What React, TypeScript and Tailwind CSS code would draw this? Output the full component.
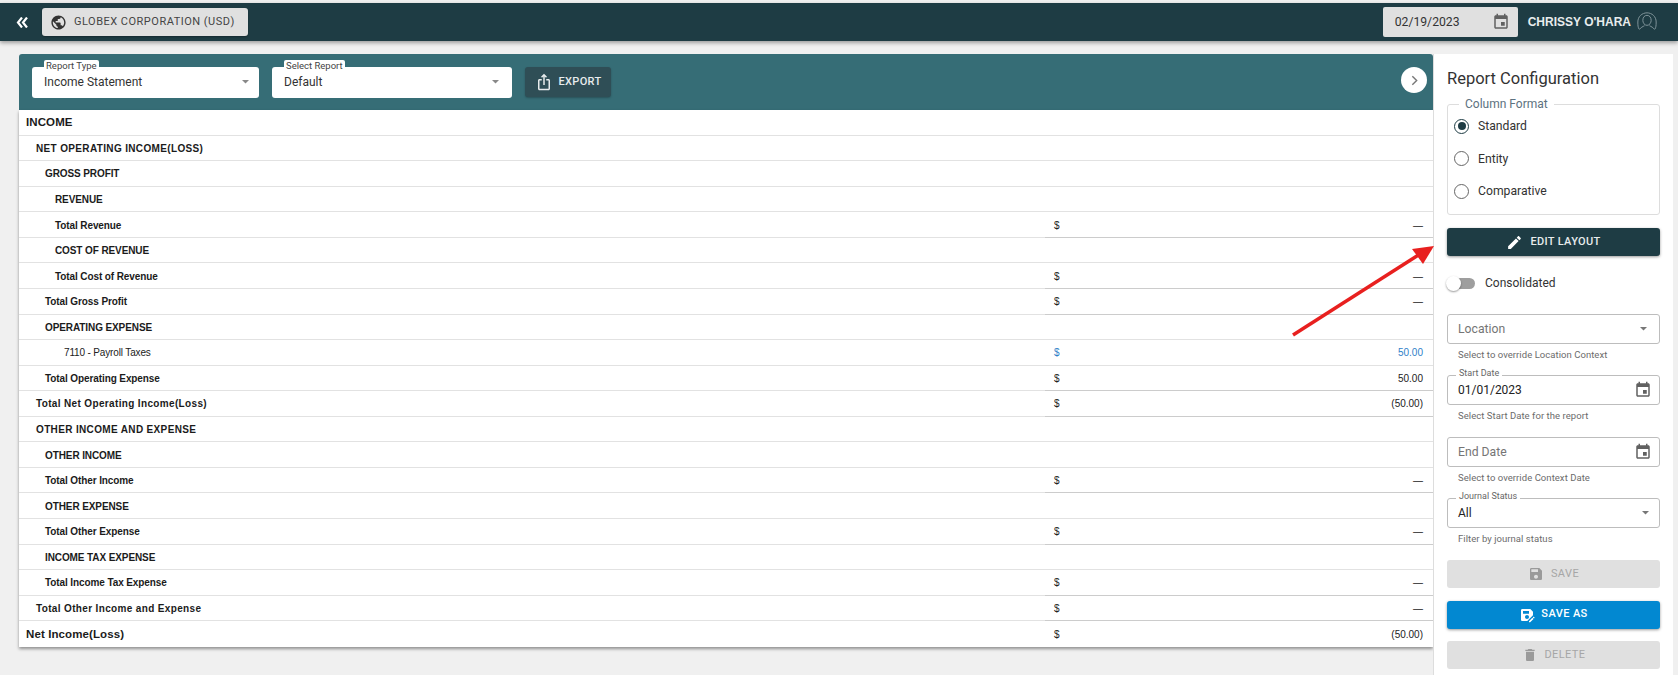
import React from "react";

const P = {
  event: "M17 12h-5v5h5v-5zM16 1v2H8V1H6v2H5c-1.11 0-1.99.9-1.99 2L3 19c0 1.1.89 2 2 2h14c1.1 0 2-.9 2-2V5c0-1.1-.9-2-2-2h-1V1h-2zm3 18H5V8h14v11z",
  globe: "M12 2C6.48 2 2 6.48 2 12s4.48 10 10 10 10-4.48 10-10S17.52 2 12 2zm-1 17.93c-3.95-.49-7-3.85-7-7.93 0-.62.08-1.21.21-1.79L9 15v1c0 1.1.9 2 2 2v1.93zm6.9-2.54c-.26-.81-1-1.39-1.9-1.39h-1v-3c0-.55-.45-1-1-1H8v-2h2c.55 0 1-.45 1-1V7h2c1.1 0 2-.9 2-2v-.41c2.93 1.19 5 4.06 5 7.41 0 2.08-.8 3.97-2.1 5.39z",
  edit: "M3 17.25V21h3.75L17.81 9.94l-3.75-3.75L3 17.25zM20.71 7.04c.39-.39.39-1.02 0-1.41l-2.34-2.34c-.39-.39-1.02-.39-1.41 0l-1.83 1.83 3.75 3.75 1.83-1.83z",
  save: "M17 3H5c-1.11 0-2 .9-2 2v14c0 1.1.89 2 2 2h14c1.1 0 2-.9 2-2V7l-4-4zm-5 16c-1.66 0-3-1.34-3-3s1.34-3 3-3 3 1.34 3 3-1.34 3-3 3zm3-10H5V5h10v4z",
  del: "M6 19c0 1.1.9 2 2 2h8c1.1 0 2-.9 2-2V7H6v12zM19 4h-3.5l-1-1h-5l-1 1H5v2h14V4z",
  share: "M16 5l-1.42 1.42-1.59-1.59V16h-1.98V4.83L9.42 6.42 8 5l4-4 4 4zm4 5v11c0 1.1-.9 2-2 2H6c-1.11 0-2-.9-2-2V10c0-1.11.89-2 2-2h3v2H6v11h12V10h-3V8h3c1.1 0 2 .89 2 2z",
  saveAs: "M21 12.4V7l-4-4H5c-1.11 0-2 .9-2 2v14c0 1.1.89 2 2 2h7.4l8.6-8.6zM15 15c0 1.66-1.34 3-3 3s-3-1.34-3-3 1.34-3 3-3 3 1.34 3 3zM6 6h9v4H6V6zm13.99 10.25 1.77 1.77L16.77 23H15v-1.77l4.99-4.98zm3.26.26-.85.85-1.77-1.77.85-.85c.2-.2.51-.2.71 0l1.06 1.06c.2.2.2.52 0 .71z",
};

function Icon({ d, className }: { d: string; className: string }) {
  return (
    <svg viewBox="0 0 24 24" fill="currentColor" className={className}>
      <path d={d} />
    </svg>
  );
}

function Caret({ className }: { className: string }) {
  return (
    <svg viewBox="0 0 10 5" fill="currentColor" className={className}>
      <path d="M0 0h10L5 5z" />
    </svg>
  );
}

type Row = { label: string; level: 0 | 1 | 2 | 3 | 4; amount?: string };
const rows: Row[] = [
  { label: "INCOME", level: 0 },
  { label: "NET OPERATING INCOME(LOSS)", level: 1 },
  { label: "GROSS PROFIT", level: 2 },
  { label: "REVENUE", level: 3 },
  { label: "Total Revenue", level: 3, amount: "—" },
  { label: "COST OF REVENUE", level: 3 },
  { label: "Total Cost of Revenue", level: 3, amount: "—" },
  { label: "Total Gross Profit", level: 2, amount: "—" },
  { label: "OPERATING EXPENSE", level: 2 },
  { label: "7110 - Payroll Taxes", level: 4, amount: "50.00" },
  { label: "Total Operating Expense", level: 2, amount: "50.00" },
  { label: "Total Net Operating Income(Loss)", level: 1, amount: "(50.00)" },
  { label: "OTHER INCOME AND EXPENSE", level: 1 },
  { label: "OTHER INCOME", level: 2 },
  { label: "Total Other Income", level: 2, amount: "—" },
  { label: "OTHER EXPENSE", level: 2 },
  { label: "Total Other Expense", level: 2, amount: "—" },
  { label: "INCOME TAX EXPENSE", level: 2 },
  { label: "Total Income Tax Expense", level: 2, amount: "—" },
  { label: "Total Other Income and Expense", level: 1, amount: "—" },
  { label: "Net Income(Loss)", level: 0, amount: "(50.00)" },
];

const levelClass: Record<number, string> = {
  0: "pl-[7px] text-[11.5px] font-bold text-[#1b1b1b] tracking-[0.1px]",
  1: "pl-[17px] text-[10px] font-bold text-[#1b1b1b] tracking-[0.35px]",
  2: "pl-[26px] text-[10px] font-bold text-[#1b1b1b] tracking-[-0.1px]",
  3: "pl-[36px] text-[10px] font-bold text-[#1b1b1b] tracking-[-0.1px]",
  4: "pl-[45px] text-[10px] text-[#222222] tracking-[-0.15px]",
};

function TableRow({ r, last }: { r: Row; last: boolean }) {
  const acct = r.level === 4;
  const hasAmount = r.amount !== undefined;
  const amountBorder = last
    ? ""
    : hasAmount && !acct
      ? "border-b border-[#cccccc]"
      : "border-b border-[#e2e2e2]";
  return (
    <div className="flex h-[25.57px] items-stretch">
      <div className={`flex w-[1026px] items-center pt-[1px] ${levelClass[r.level]} ${last ? "" : "border-b border-[#e2e2e2]"}`}>
        <span className="whitespace-nowrap">{r.label}</span>
      </div>
      <div
        className={`flex flex-1 items-center justify-between pl-[9px] pr-[10px] pt-[1px] text-[10px] ${amountBorder} ${acct ? "text-[#2f7fc8]" : "text-[#222222]"}`}
      >
        {hasAmount && <span>$</span>}
        {hasAmount && <span>{r.amount}</span>}
      </div>
    </div>
  );
}

function HelperText({ children }: { children: React.ReactNode }) {
  return <div className="mt-[4px] pl-[11px] text-[9.5px] leading-[14px] tracking-[0.05px] text-[#6b6b6b]">{children}</div>;
}

function Radio({ label, checked }: { label: string; checked?: boolean }) {
  return (
    <div className="flex h-[32.5px] items-center gap-[9px] pl-[1px]">
      <span className={`flex h-[15px] w-[15px] items-center justify-center rounded-full border-[1.5px] ${checked ? "border-[#1e3c44]" : "border-[#666666]"}`}>
        {checked && <span className="h-[8px] w-[8px] rounded-full bg-[#1e3c44]" />}
      </span>
      <span className="text-[12.2px] text-[#333333]">{label}</span>
    </div>
  );
}

function Field({
  label,
  value,
  placeholder,
  trailing,
}: {
  label?: string;
  value?: string;
  placeholder?: string;
  trailing: React.ReactNode;
}) {
  return (
    <div className="relative flex h-[30px] items-center justify-between rounded-[3px] border border-[#bdbdbd] pl-[10px] pr-[7px]">
      {label && (
        <span className="absolute -top-[8px] left-[8px] bg-white px-[3px] text-[9px] leading-[11px] text-[#666666]">
          {label}
        </span>
      )}
      {value && <span className="text-[12px] text-[#222222]">{value}</span>}
      {placeholder && <span className="text-[12.2px] text-[#757575]">{placeholder}</span>}
      {trailing}
    </div>
  );
}

function ActionButton({ icon, label, active, gap }: { icon: string; label: string; active?: boolean; gap: string }) {
  return (
    <div
      className={`flex h-[28px] items-center justify-center ${gap} rounded-[3px] text-[11px] tracking-[0.4px] ${active ? "bg-[#0288d1] font-medium text-white shadow-[0_1px_3px_rgba(0,0,0,0.4)]" : "bg-[#e0e0e0] text-[#a6a6a6]"}`}
    >
      <Icon d={icon} className={`h-[16px] w-[16px] ${active ? "text-white" : "text-[#9a9a9a]"}`} />
      {label}
    </div>
  );
}

function ReportSelect({ label, value, width, caretPad }: { label: string; value: string; width: string; caretPad: string }) {
  return (
    <div className={`relative flex h-[31px] ${width} items-center justify-between rounded-[3px] bg-white pl-[12px] ${caretPad}`}>
      <span className="absolute -top-[7px] left-[12px] rounded-t-[2px] bg-white px-[2px] text-[9.5px] leading-[11px] text-[#444444]">
        {label}
      </span>
      <span className="text-[12px] text-[#333333]">{value}</span>
      <Caret className="h-[3.5px] w-[7px] text-[#888888]" />
    </div>
  );
}

export default function App() {
  return (
    <div className="relative flex h-[675px] w-full flex-col overflow-hidden bg-[#f0f0f0] font-['Roboto',sans-serif]">
      <div className="h-[3px] bg-[#f0f0f0]" />
      <header className="z-10 flex h-[38px] items-center justify-between bg-[#1e3c44] shadow-[0_2px_4px_rgba(0,0,0,0.35)]">
        <div className="flex items-center">
          <svg viewBox="0 0 12 11" fill="none" stroke="white" strokeWidth="2.2" className="ml-[16px] h-[11px] w-[12px]">
            <path d="M6 .5L2 5.5 6 10.5M11 .5L7 5.5 11 10.5" />
          </svg>
          <div className="ml-[14px] flex h-[28px] w-[206px] items-center gap-[7px] rounded-[3px] bg-[#e0e0e0] pl-[8px] text-[11px] tracking-[0.5px] whitespace-nowrap text-[#444444] shadow-[0_1px_2px_rgba(0,0,0,0.3)]">
            <Icon d={P.globe} className="h-[17px] w-[17px] text-[#333333]" />
            GLOBEX CORPORATION (USD)
          </div>
        </div>
        <div className="flex items-center">
          <div className="flex h-[30px] w-[135px] items-center justify-between rounded-[2px] bg-[#e0e0e0] pl-[12px] pr-[8px] text-[12.2px] text-[#333333]">
            02/19/2023
            <Icon d={P.event} className="h-[18px] w-[18px] text-[#616161]" />
          </div>
          <span className="ml-[10px] font-['Liberation_Sans',sans-serif] text-[12px] font-bold text-[#e8eced]">CHRISSY O'HARA</span>
          <svg viewBox="0 0 24 24" fill="none" stroke="#7f9399" strokeWidth="1.2" className="ml-[6px] mr-[21px] h-[20px] w-[20px]">
            <path d="M2.5 20.5C1.2 18.5 1 16 1 12 1 5.5 6 1 12 1s11 4.500 11 11c0 4-.2 6.500-1.500 8.500" />
            <path d="M7 10c0-3.500 2-6 5-6s5 2.500 5 6c0 3-2 6-5 6s-5-3-5-6z" />
            <path d="M3 21c1.500-2.500 4-3.500 6-4.500M21 21c-1.500-2.500-4-3.500-6-4.500" />
          </svg>
        </div>
      </header>

      <div className="flex flex-1 pl-[19px] pt-[13px]">
        <main className="w-[1414px]">
          <div className="flex h-[56px] items-center rounded-t-[3px] bg-[#366d76] pl-[13px] pr-[6px]">
            <ReportSelect label="Report Type" value="Income Statement" width="w-[227px]" caretPad="pr-[10px]" />
            <div className="w-[13px]" />
            <ReportSelect label="Select Report" value="Default" width="w-[240px]" caretPad="pr-[13px]" />
            <div className="ml-[13px] flex h-[30px] w-[86px] items-center justify-center gap-[6px] rounded-[3px] bg-[#2f4e56] text-[11px] font-medium tracking-[0.3px] text-[#e8eced] shadow-[0_1px_2px_rgba(0,0,0,0.25)]">
              <Icon d={P.share} className="h-[18px] w-[18px]" />
              EXPORT
            </div>
            <div className="ml-auto flex h-[26px] w-[26px] -translate-y-[2px] items-center justify-center rounded-full bg-white text-[#777777]">
              <svg viewBox="0 0 24 24" fill="none" stroke="currentColor" strokeWidth="2.6" className="h-[13px] w-[13px]">
                <path d="M8 4l8 8-8 8" />
              </svg>
            </div>
          </div>
          <div className="bg-white font-['Liberation_Sans',sans-serif] shadow-[0_2px_3px_rgba(0,0,0,0.4)]">
            {rows.map((r, i) => (
              <TableRow key={r.label} r={r} last={i === rows.length - 1} />
            ))}
          </div>
        </main>

        <aside className="w-[240px] border-l border-[#dddddd] bg-white pl-[13px] pr-[13px] pt-[16px]">
          <h2 className="text-[16.5px] leading-[18px] font-normal text-[#333333]">Report Configuration</h2>
          <fieldset className="mt-[10px] h-[117px] rounded-[3px] border border-[#dddddd] px-[5px]">
            <legend className="ml-[6px] px-[6px] text-[12px] leading-[12px] text-[#5d7280]">Column Format</legend>
            <Radio label="Standard" checked />
            <Radio label="Entity" />
            <Radio label="Comparative" />
          </fieldset>

          <div className="mt-[13px] flex h-[28px] items-center justify-center gap-[7px] rounded-[3px] bg-[#1e3c44] text-[11px] font-medium tracking-[0.35px] text-[#e8eced] shadow-[0_1px_3px_rgba(0,0,0,0.4)]">
            <Icon d={P.edit} className="h-[17px] w-[17px] text-white" />
            EDIT LAYOUT
          </div>

          <div className="mt-[19px] flex h-[16px] items-center">
            <div className="relative h-[11px] w-[28px] rounded-full bg-[#9e9e9e]">
              <span className="absolute -left-[1px] -top-[2px] h-[15px] w-[15px] rounded-full bg-white shadow-[0_1px_2px_rgba(0,0,0,0.4)]" />
            </div>
            <span className="ml-[10px] text-[12px] text-[#333333]">Consolidated</span>
          </div>

          <div className="mt-[23px]">
            <Field placeholder="Location" trailing={<Caret className="mr-[5px] h-[3.5px] w-[7px] text-[#777777]" />} />
            <HelperText>Select to override Location Context</HelperText>
          </div>
          <div className="mt-[13px]">
            <Field label="Start Date" value="01/01/2023" trailing={<Icon d={P.event} className="h-[18px] w-[18px] text-[#616161]" />} />
            <HelperText>Select Start Date for the report</HelperText>
          </div>
          <div className="mt-[14px]">
            <Field placeholder="End Date" trailing={<Icon d={P.event} className="h-[18px] w-[18px] text-[#616161]" />} />
            <HelperText>Select to override Context Date</HelperText>
          </div>
          <div className="mt-[13px]">
            <Field label="Journal Status" value="All" trailing={<Caret className="mr-[3px] h-[3.5px] w-[7px] text-[#777777]" />} />
            <HelperText>Filter by journal status</HelperText>
          </div>

          <div className="mt-[14px] flex flex-col gap-[12.5px]">
            <ActionButton icon={P.save} label="SAVE" gap="gap-[7px]" />
            <ActionButton icon={P.saveAs} label="SAVE AS" gap="gap-[6px]" active />
            <ActionButton icon={P.del} label="DELETE" gap="gap-[7px]" />
          </div>
        </aside>
      </div>

      <svg viewBox="0 0 1678 675" className="pointer-events-none absolute left-0 top-0 h-[675px] w-[1678px]">
        <line x1="1293" y1="335" x2="1420" y2="254" stroke="#e8201f" strokeWidth="3.5" />
        <polygon points="1434,246 1412,249 1423,264" fill="#e8201f" />
      </svg>
    </div>
  );
}
